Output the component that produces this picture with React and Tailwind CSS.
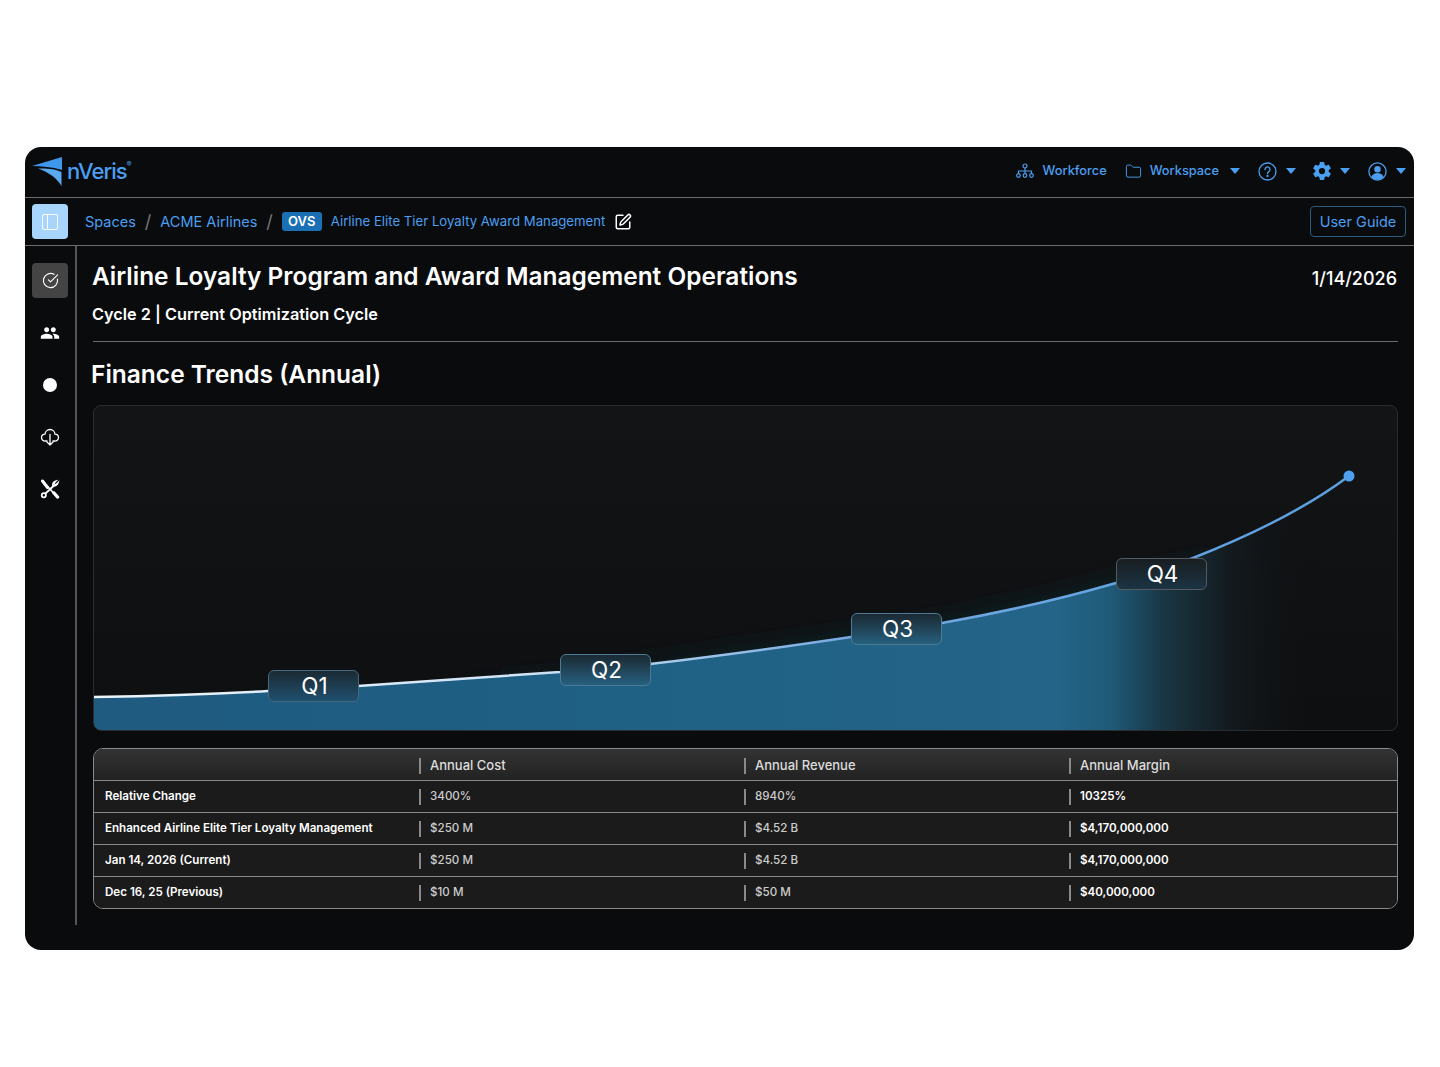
import React from "react";
import { CircleCheckBig, Folder, PanelLeft, SquarePen } from "lucide-react";
import { IoSettingsSharp } from "react-icons/io5";
import { MdPeople } from "react-icons/md";

const Caret = () => (
  <svg width="10" height="6" viewBox="0 0 10 6" className="text-[#4a9ff0]">
    <path d="M0 0h10L5 6z" fill="currentColor" />
  </svg>
);

const Logo = () => (
  <svg width="31" height="31" viewBox="0 0 31 31">
    <path d="M30 1V14C20 11 10 10 0 10Z" fill="#3f97ec" />
    <path d="M6 12.500C14 12 24 13 29.500 16V30C25 22 16 16 6 12.500Z" fill="#5aa8f0" />
  </svg>
);

const WorkforceIcon = () => (
  <svg width="18" height="16" viewBox="0 0 18 16" fill="none" stroke="#4a9ff0" strokeWidth="1.200">
    <circle cx="9" cy="3" r="2" />
    <circle cx="2.500" cy="12.500" r="1.800" />
    <circle cx="9" cy="12.500" r="1.800" />
    <circle cx="15.500" cy="12.500" r="1.800" />
    <path d="M9 5v5.500M2.500 10.500V8h13v2.500" />
  </svg>
);

const HelpIcon = () => (
  <svg width="19" height="19" viewBox="0 0 19 19" fill="none" stroke="#4a9ff0" strokeWidth="1.300">
    <circle cx="9.500" cy="9.500" r="8.500" />
    <path d="M7 7.500a2.500 2.500 0 1 1 3.800 2.100c-.9.600-1.300 1-1.300 2" strokeLinecap="round" />
    <circle cx="9.500" cy="14" r=".5" fill="#4a9ff0" />
  </svg>
);

const UserIcon = () => (
  <svg width="19" height="19" viewBox="0 0 19 19">
    <circle cx="9.500" cy="9.500" r="8.600" fill="none" stroke="#4a9ff0" strokeWidth="1.300" />
    <circle cx="9.500" cy="7.300" r="3.200" fill="#4a9ff0" />
    <path d="M3.500 15c1-3 3.300-4 6-4s5 1 6 4a8 8 0 0 1-12 0z" fill="#4a9ff0" />
  </svg>
);

const CloudIcon = () => (
  <svg width="20" height="20" viewBox="0 0 20 20" fill="none" stroke="#fff" strokeWidth="1.300" strokeLinecap="round" strokeLinejoin="round">
    <path d="M7 14H5.500A3.500 3.500 0 0 1 1.500 10.500 3.500 3.500 0 0 1 5 7.200 5 5 0 0 1 10 2.500a5 5 0 0 1 5 4.700 3.500 3.500 0 0 1 3.500 3.300A3.500 3.500 0 0 1 14.500 14H13" />
    <path d="M10 7.500V18M7 15l3 3 3-3" />
  </svg>
);

const ToolsIcon = () => (
  <svg width="20" height="20" viewBox="0 0 20 20" fill="none" stroke="#fff" strokeLinecap="round">
    <path d="M2.500 2l13 14" strokeWidth="1.800" />
    <path d="M2.500 2l5 6.500" strokeWidth="3" />
    <path d="M14 6.500L5.500 14.500" strokeWidth="1.800" />
    <path d="M18 3.800l-2.400 2.300-1.800-1.800 2.300-2.400a4 4 0 0 0-3.300 4.600 4 4 0 0 0 5.200-2.700z" strokeWidth="1.500" />
    <circle cx="3.800" cy="16.200" r="2.100" strokeWidth="1.700" />
    <path d="M14 14l3.500 4" strokeWidth="3.400" />
  </svg>
);

const curve =
  "M0 291 C60 290 120 288 174 285 C205 283.500 235 282 264 280 C330 275 400 271 466 266 C496 263 526 261 556 258 C625 250 690 241 757 231 C788 226 818 222 848 217 C910 206 970 192 1022 177 C1048 170 1074 162 1099 152 C1160 128 1215 100 1255 70";

const quarters = [
  { label: "Q1", left: 174, top: 264, tone: "border-[#47677c] from-[#1a2a33] to-[#1f5070]" },
  { label: "Q2", left: 466, top: 248, tone: "border-[#4f7a93] from-[#1a2a33] to-[#25607f]" },
  { label: "Q3", left: 757, top: 207, tone: "border-[#4f7a93] from-[#1a2a33] to-[#25607f]" },
  { label: "Q4", left: 1022, top: 152, tone: "border-[#555b60] from-[#181e22] to-[#1b3444]" },
];

const rows = [
  ["Relative Change", "3400%", "8940%", "10325%"],
  ["Enhanced Airline Elite Tier Loyalty Management", "$250 M", "$4.52 B", "$4,170,000,000"],
  ["Jan 14, 2026 (Current)", "$250 M", "$4.52 B", "$4,170,000,000"],
  ["Dec 16, 25 (Previous)", "$10 M", "$50 M", "$40,000,000"],
];

const Cell = ({ children, className }) => (
  <div className={`flex items-center ${className}`}>
    <span className="mr-[9px] h-4 w-[2px] bg-[#8a8a8a]" />
    {children}
  </div>
);

const Chart = () => (
  <div className="relative h-[326px] overflow-hidden rounded-lg border border-[#2a2c30] bg-gradient-to-b from-[#131416] to-[#0e0f11]">
    <svg viewBox="0 0 1303 324" className="block h-full w-full">
      <defs>
        <linearGradient id="fade" gradientUnits="userSpaceOnUse" x1="0" x2="1303" y1="0" y2="0">
          <stop offset="0" stopColor="#1f5a80" />
          <stop offset="0.4" stopColor="#1f6085" />
          <stop offset="0.74" stopColor="#236488" />
          <stop offset="0.78" stopColor="#1f5a78" />
          <stop offset="0.82" stopColor="#1a3745" />
          <stop offset="0.87" stopColor="#131b20" />
          <stop offset="0.94" stopColor="#0e0f11" stopOpacity="0" />
        </linearGradient>
        <linearGradient id="glow" gradientUnits="userSpaceOnUse" x1="300" x2="1150" y1="0" y2="0">
          <stop offset="0" stopColor="#0f3a3e" stopOpacity="0" />
          <stop offset="0.4" stopColor="#0f3a3e" stopOpacity="0.45" />
          <stop offset="0.85" stopColor="#0f3a3e" stopOpacity="0.5" />
          <stop offset="1" stopColor="#0f3a3e" stopOpacity="0" />
        </linearGradient>
        <linearGradient id="stroke" gradientUnits="userSpaceOnUse" x1="0" x2="1255" y1="0" y2="0">
          <stop offset="0" stopColor="#eef5fb" />
          <stop offset="0.35" stopColor="#cfe4f5" />
          <stop offset="0.6" stopColor="#75a9e0" />
          <stop offset="1" stopColor="#5a9fe0" />
        </linearGradient>
        <filter id="soft" x="-10%" y="-40%" width="120%" height="180%">
          <feGaussianBlur stdDeviation="14" />
        </filter>
      </defs>
      <path d={`${curve} V326 H0 Z`} fill="url(#glow)" filter="url(#soft)" />
      <path d={`${curve} V326 H0 Z`} fill="url(#fade)" />
      <path d={curve} fill="none" stroke="url(#stroke)" strokeWidth="2.500" />
      <circle cx="1255" cy="70" r="5.500" fill="#4f9ff0" />
    </svg>
    {quarters.map((q) => (
      <div
        key={q.label}
        className={`absolute flex h-[32px] w-[91px] items-center justify-center rounded-md border bg-gradient-to-b ${q.tone} pl-[2px] text-[22.500px] text-white`}
        style={{ left: q.left, top: q.top }}
      >
        {q.label}
      </div>
    ))}
  </div>
);

export default function App() {
  return (
    <div className="min-h-[1067px] bg-white pl-[25px] pt-[147px] font-['Inter',sans-serif]">
      <div className="h-[803px] w-[1389px] overflow-hidden rounded-2xl bg-[#0a0b0d]">
        <header className="flex h-[51px] items-center justify-between border-b border-[#6b6b6b] pb-[2px] pl-[7px] pr-[8px]">
          <div className="flex items-center">
            <Logo />
            <span className="ml-[4px] text-[22px] font-medium tracking-[-1px] text-[#4a9ff0]">nVeris</span>
            <span className="mb-3 text-[7px] text-[#4a9ff0]">®</span>
          </div>
          <div className="flex items-center text-[12.800px] font-medium text-[#4a9ff0]">
            <WorkforceIcon />
            <span className="ml-[9px]">Workforce</span>
            <span className="ml-[18px]"><Folder size={17} strokeWidth={1.3} /></span>
            <span className="ml-[8px]">Workspace</span>
            <span className="ml-[11px]"><Caret /></span>
            <span className="ml-[18px]"><HelpIcon /></span>
            <span className="ml-[9px]"><Caret /></span>
            <span className="ml-[16px]"><IoSettingsSharp size={20} /></span>
            <span className="ml-[8px]"><Caret /></span>
            <span className="ml-[18px]"><UserIcon /></span>
            <span className="ml-[9px]"><Caret /></span>
          </div>
        </header>
        <div className="flex h-[48px] items-center justify-between border-b border-[#6b6b6b] pl-[7px] pr-[8px]">
          <div className="flex items-center text-[14.500px] text-[#4a9ff0]">
            <div className="flex h-[35px] w-[36px] items-center justify-center rounded-[4px] bg-[#a8d5fb]">
              <PanelLeft size={20} strokeWidth={1.2} className="text-white" />
            </div>
            <span className="ml-[17px] pt-px">Spaces</span>
            <span className="mx-[9px] text-[18px] text-[#777]">/</span>
            <span className="pt-px">ACME Airlines</span>
            <span className="mx-[9px] text-[18px] text-[#777]">/</span>
            <span className="flex h-[19px] w-[40px] items-center justify-center rounded-[3px] bg-[#1b6fb5] text-[13px] font-semibold text-white">OVS</span>
            <span className="ml-[9px] text-[13.200px]">Airline Elite Tier Loyalty Award Management</span>
            <SquarePen size={18} strokeWidth={2} className="ml-[9px] text-white" />
          </div>
          <button className="flex h-[31px] w-[96px] items-center justify-center rounded-[4px] border border-[#2c5a80] pt-px text-[14.500px] text-[#4a9ff0]">User Guide</button>
        </div>
        <div className="flex">
          <aside className="flex h-[679px] w-[52px] shrink-0 flex-col items-center border-r-2 border-[#555] pt-[17px]">
            <div className="flex h-[35px] w-[36px] items-center justify-center rounded-[4px] bg-[#444]">
              <CircleCheckBig size={17} strokeWidth={1.6} className="text-white" />
            </div>
            <div className="mt-[17px] flex h-[35px] items-center justify-center text-white"><MdPeople size={20} /></div>
            <div className="mt-[17px] flex h-[35px] items-center justify-center"><span className="h-[14px] w-[14px] rounded-full bg-white" /></div>
            <div className="mt-[17px] flex h-[35px] items-center justify-center"><CloudIcon /></div>
            <div className="mt-[17px] flex h-[35px] items-center justify-center"><ToolsIcon /></div>
          </aside>
          <main className="min-w-0 flex-1 pl-[16px] pr-[16px]">
            <div className="flex items-start justify-between pt-[14px]">
              <h1 className="-ml-px text-[24.450px] font-semibold leading-[32px] text-white">Airline Loyalty Program and Award Management Operations</h1>
              <span className="pr-px pt-[5px] text-[18px] font-medium text-white">1/14/2026</span>
            </div>
            <div className="-ml-px mt-[10px] text-[16.300px] font-semibold leading-[24px] text-white">Cycle 2 | Current Optimization Cycle</div>
            <div className="mt-[15px] h-px bg-[#6b6b6b]" />
            <h2 className="-ml-[2px] mt-[16px] text-[24.500px] font-semibold leading-[32px] text-white">Finance Trends (Annual)</h2>
            <div className="mt-[15px]"><Chart /></div>
            <div className="mt-[17px] overflow-hidden rounded-[10px] border border-[#8a8a8a] text-[11.600px] font-medium text-[#e5e5e5]">
              <div className="grid h-[32px] grid-cols-[325px_325px_325px_1fr] items-center border-b border-[#8a8a8a] bg-gradient-to-b from-[#333] to-[#222] pt-[2px] text-[13px] text-[#ddd]">
                <div />
                <Cell>Annual Cost</Cell>
                <Cell>Annual Revenue</Cell>
                <Cell>Annual Margin</Cell>
              </div>
              {rows.map((r, i) => (
                <div key={r[0]} className={`grid grid-cols-[325px_325px_325px_1fr] items-center bg-[#1b1b1b] pt-px ${i < 3 ? "h-[32px] border-b border-[#8a8a8a]" : "h-[31px]"}`}>
                  <div className="pl-[11px] font-semibold text-white">{r[0]}</div>
                  <Cell className="text-[#ccc]">{r[1]}</Cell>
                  <Cell className="text-[#ccc]">{r[2]}</Cell>
                  <Cell className="font-semibold text-white">{r[3]}</Cell>
                </div>
              ))}
            </div>
          </main>
        </div>
      </div>
    </div>
  );
}
